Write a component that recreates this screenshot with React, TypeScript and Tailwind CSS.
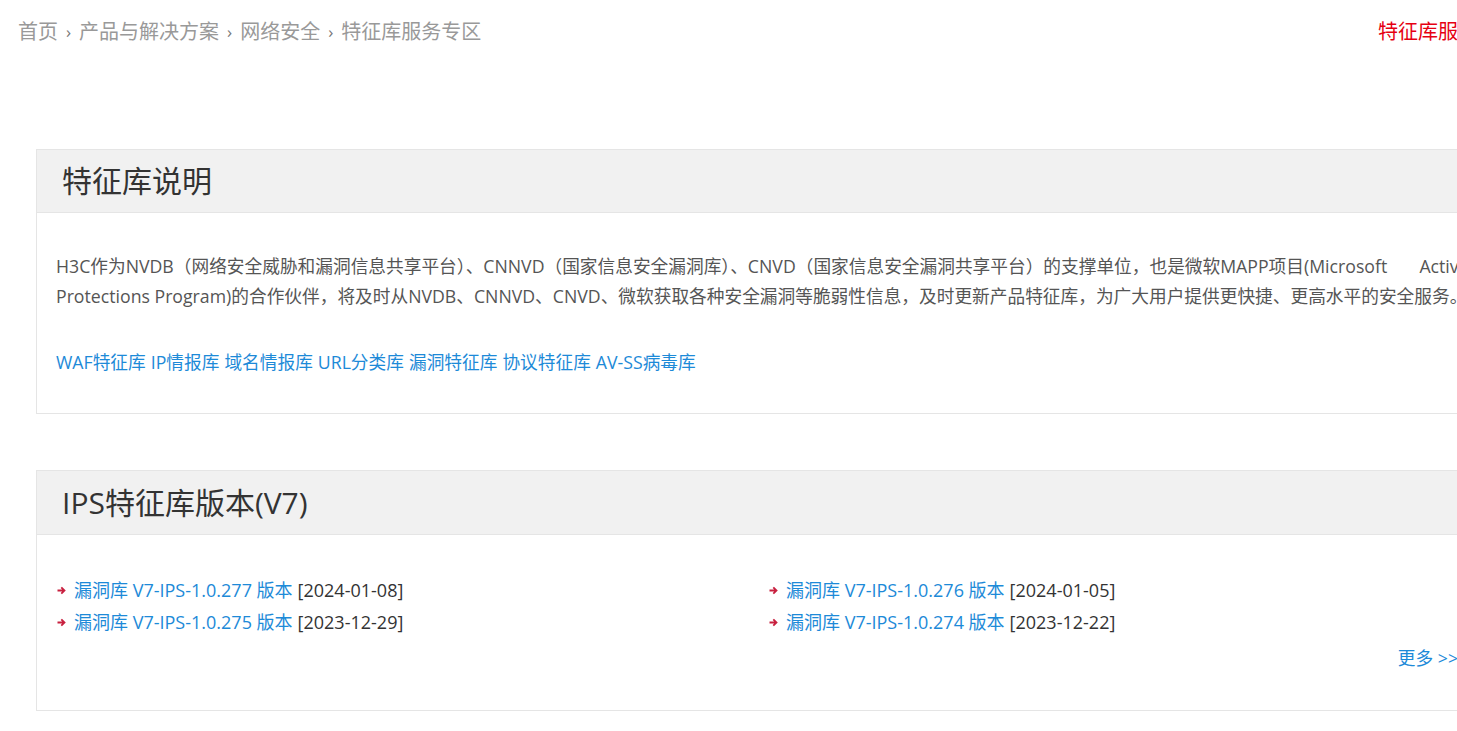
const FONT = { fontFamily: "'Open Sans', 'Noto Sans CJK SC', sans-serif" };

const links = ["WAF特征库", "IP情报库", "域名情报库", "URL分类库", "漏洞特征库", "协议特征库", "AV-SS病毒库"];

const versions = [
  { name: "漏洞库 V7-IPS-1.0.277 版本", date: "[2024-01-08]" },
  { name: "漏洞库 V7-IPS-1.0.276 版本", date: "[2024-01-05]" },
  { name: "漏洞库 V7-IPS-1.0.275 版本", date: "[2023-12-29]" },
  { name: "漏洞库 V7-IPS-1.0.274 版本", date: "[2023-12-22]" },
];

function Arrow() {
  return (
    <svg width="9" height="9" viewBox="0 0 9 9" className="shrink-0">
      <path d="M0.5 4.5H7.5M4.3 1.3L7.5 4.5L4.3 7.7" fill="none" stroke="#c8203f" strokeWidth="1.8" />
    </svg>
  );
}

function Crumb({ text }: { text: string }) {
  return <span className="text-[#999]">{text}</span>;
}

function Sep() {
  return <span className="mx-[8px] text-[17px] text-[#777]">›</span>;
}

export default function App() {
  return (
    <div className="w-full min-h-[731px] overflow-hidden bg-white" style={FONT}>
      <div className="w-[1518px]">
        {/* Breadcrumb */}
        <div className="flex justify-between pt-[19px] text-[20px] leading-[26px] whitespace-nowrap">
          <div className="pl-[18px] flex items-center">
            <Crumb text="首页" />
            <Sep />
            <Crumb text="产品与解决方案" />
            <Sep />
            <Crumb text="网络安全" />
            <Sep />
            <Crumb text="特征库服务专区" />
          </div>
          <div className="text-[#e60012]">特征库服务专区</div>
        </div>

        {/* Intro box */}
        <div className="ml-[36px] mt-[104px] w-[1445px] border border-[#e5e5e5]">
          <div className="h-[63px] bg-[#f1f1f1] border-b border-[#e5e5e5] pl-[25px] flex items-center">
            <h2 className="text-[30px] text-[#333] leading-none">特征库说明</h2>
          </div>
          <div className="px-[19px] pt-[38px] pb-[36px]">
            <div className="text-[17.7px] leading-[30px] text-[#555] whitespace-nowrap">
              <p>H3C作为NVDB（网络安全威胁和漏洞信息共享平台）、CNNVD（国家信息安全漏洞库）、CNVD（国家信息安全漏洞共享平台）的支撑单位，也是微软MAPP项目(Microsoft&nbsp;&nbsp;&nbsp;&nbsp;&nbsp;&nbsp;&nbsp;Active</p>
              <p>Protections Program)的合作伙伴，将及时从NVDB、CNNVD、CNVD、微软获取各种安全漏洞等脆弱性信息，及时更新产品特征库，为广大用户提供更快捷、更高水平的安全服务。</p>
            </div>
            <div className="mt-[36px] flex gap-[5px] text-[17.7px] leading-[30px] text-[#1d8ad8]">
              {links.map((l) => (
                <span key={l}>{l}</span>
              ))}
            </div>
          </div>
        </div>

        {/* IPS versions */}
        <div className="ml-[36px] mt-[56px] w-[1445px] border border-[#e5e5e5]">
          <div className="h-[64px] bg-[#f1f1f1] border-b border-[#e5e5e5] pl-[25px] flex items-center">
            <h2 className="text-[30px] text-[#333] leading-none">IPS特征库版本(V7)</h2>
          </div>
          <div className="pl-[20px] pr-[22px] pt-[39px] pb-[39px]">
            <div className="grid grid-cols-[712px_1fr] text-[18px] leading-[32px] whitespace-nowrap">
              {versions.map((v) => (
                <div key={v.name} className="flex items-center">
                  <Arrow />
                  <span className="ml-[8px] text-[#1d8ad8]">{v.name}</span>
                  <span className="ml-[5px] text-[#333]">{v.date}</span>
                </div>
              ))}
            </div>
            <div className="mt-[7px] text-right text-[17.7px] leading-[26px] text-[#1d8ad8]">更多 &gt;&gt;</div>
          </div>
        </div>
      </div>
    </div>
  );
}
